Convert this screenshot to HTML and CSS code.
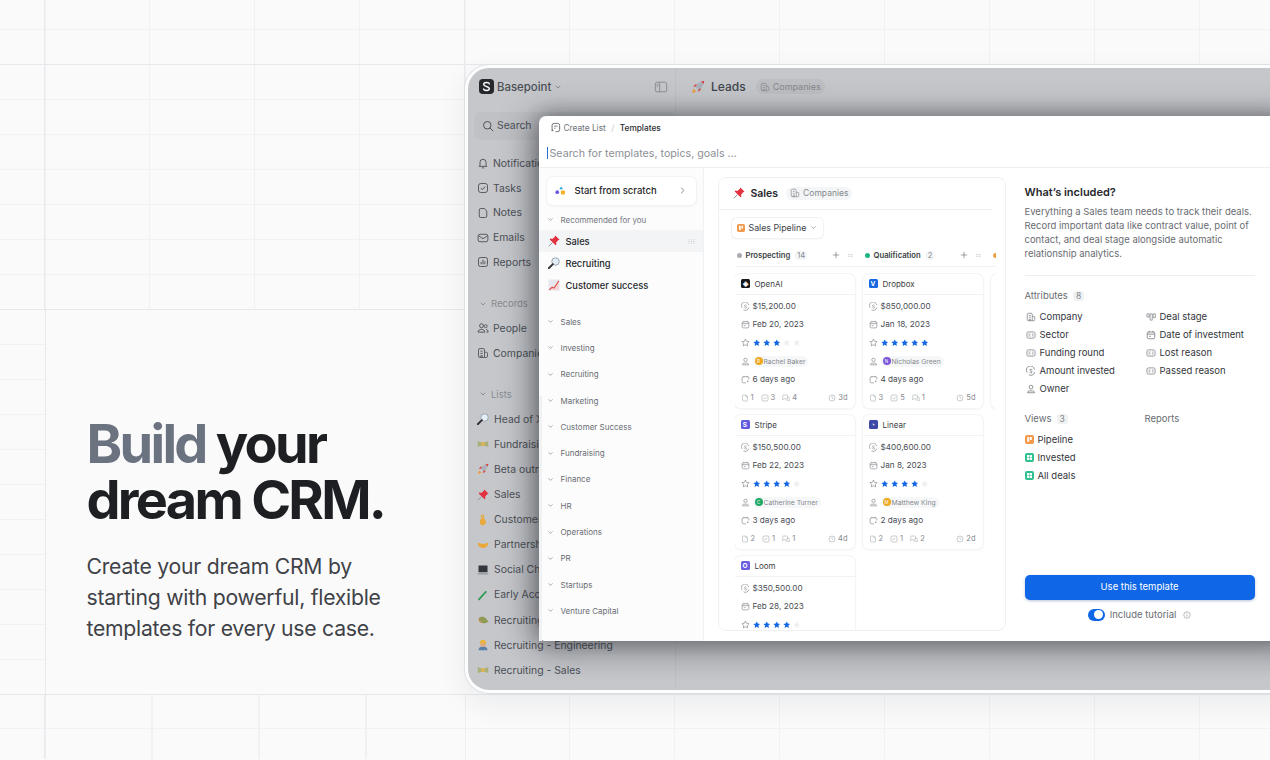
FILE: index.html
```html
<!DOCTYPE html>
<html lang="en">
<head>
    <meta charset="UTF-8">
    <meta name="viewport" content="width=device-width, initial-scale=1.0">
    <title>Build your dream CRM</title>
    <link rel="stylesheet" href="styles.css">
</head>
<body>

<!-- icon sprite -->
<svg class="sprite" xmlns="http://www.w3.org/2000/svg">
    <symbol id="logo" viewBox="0 0 16 16"><rect width="16" height="16" rx="4" fill="#26282c"/><path d="M11 5.2C11 4.2 10 3.8 8 3.8S5 4.6 5 5.8 6.2 7.4 8 8s3 1 3 2.2-1 2-3 2-3-.5-3-1.5" fill="none" stroke="#fff" stroke-width="1.5" stroke-linecap="round"/></symbol>
    <symbol id="chev" viewBox="0 0 16 16"><path d="M4 6l4 4 4-4" fill="none" stroke="currentColor" stroke-width="1.6" stroke-linecap="round" stroke-linejoin="round"/></symbol>
    <symbol id="right" viewBox="0 0 16 16"><path d="M6 3.5l4.5 4.5L6 12.5" fill="none" stroke="currentColor" stroke-width="1.4" stroke-linecap="round" stroke-linejoin="round"/></symbol>
    <symbol id="panel" viewBox="0 0 16 16"><rect x="1.5" y="2.5" width="13" height="11" rx="2" fill="none" stroke="currentColor"/><path d="M6.5 2.5v11M3 5h2M3 7h2" fill="none" stroke="currentColor"/></symbol>
    <symbol id="search" viewBox="0 0 16 16"><circle cx="7" cy="7" r="5" fill="none" stroke="currentColor" stroke-width="1.3"/><path d="M11 11l3.5 3.5" stroke="currentColor" stroke-width="1.3" stroke-linecap="round"/></symbol>
    <symbol id="bell" viewBox="0 0 16 16"><path d="M4 11V7a4 4 0 018 0v4l1.2 1.5H2.8zM6.5 14.5h3" fill="none" stroke="currentColor" stroke-width="1.2" stroke-linejoin="round"/></symbol>
    <symbol id="task" viewBox="0 0 16 16"><rect x="2" y="2" width="12" height="12" rx="3" fill="none" stroke="currentColor" stroke-width="1.2"/><path d="M5 8l2.2 2.2L11 6" fill="none" stroke="currentColor" stroke-width="1.2"/></symbol>
    <symbol id="note" viewBox="0 0 16 16"><path d="M3 4a2 2 0 012-2h5l3 3.5V12a2 2 0 01-2 2H5a2 2 0 01-2-2z" fill="none" stroke="currentColor" stroke-width="1.2" stroke-linejoin="round"/></symbol>
    <symbol id="mail" viewBox="0 0 16 16"><rect x="1.5" y="3" width="13" height="10" rx="2.5" fill="none" stroke="currentColor" stroke-width="1.2"/><path d="M2 5l6 4 6-4" fill="none" stroke="currentColor" stroke-width="1.2"/></symbol>
    <symbol id="report" viewBox="0 0 16 16"><rect x="2" y="2" width="12" height="12" rx="2.5" fill="none" stroke="currentColor" stroke-width="1.2"/><path d="M5.5 11V8M8 11V5M10.5 11V7" stroke="currentColor" stroke-width="1.2"/></symbol>
    <symbol id="people" viewBox="0 0 16 16"><circle cx="6" cy="5" r="2.6" fill="none" stroke="currentColor" stroke-width="1.2"/><circle cx="11.5" cy="5.5" r="2" fill="none" stroke="currentColor" stroke-width="1.1"/><path d="M1.5 13.5c0-2.5 2-3.7 4.500-3.700s4.500 1.200 4.500 3.700zM12 9.800c1.600.2 2.800 1.300 2.800 3.700h-2" fill="none" stroke="currentColor" stroke-width="1.2"/></symbol>
    <symbol id="company" viewBox="0 0 16 16"><path d="M2 4a2 2 0 012-2h4a2 2 0 012 2v10H4a2 2 0 01-2-2zM10 7h2.500a1.500 1.500 0 011.500 1.500V12a2 2 0 01-2 2h-2M4.500 5.500h3M4.500 8.500h3M5 14v-2.500h2V14" fill="none" stroke="currentColor" stroke-width="1.1"/></symbol>
    <symbol id="create" viewBox="0 0 16 16"><path d="M3 11V5a3 3 0 013-3h5a3 3 0 013 3v6a3 3 0 01-3 3H8" fill="none" stroke="currentColor" stroke-width="1.200"/><path d="M6 6h5M6 9h2M3.500 13v-2.500M2 12.500h3" stroke="currentColor" stroke-width="1.100"/></symbol>
    <symbol id="drag" viewBox="0 0 16 16"><path d="M3 5h1.500M7.200 5h1.500M11.500 5H13M3 8h1.500M7.200 8h1.500M11.500 8H13M3 11h1.500M7.200 11h1.500M11.500 11H13" stroke="currentColor" stroke-width="1.400"/></symbol>
    <symbol id="grip" viewBox="0 0 16 16"><path d="M3 6h10M3 10h10" stroke="currentColor" stroke-width="1.300" stroke-dasharray="4 2"/></symbol>
    <symbol id="plus" viewBox="0 0 16 16"><path d="M8 2.500v11M2.500 8h11" stroke="currentColor" stroke-width="1.300" stroke-linecap="round"/></symbol>
    <symbol id="dollar" viewBox="0 0 16 16"><path d="M13.500 5.500A6.500 6.500 0 102 10.500M4.500 14a6.500 6.500 0 009.500-4" fill="none" stroke="currentColor" stroke-width="1.200"/><path d="M10 6.300C9.700 5.500 9 5.200 8 5.200c-1.200 0-2 .6-2 1.400 0 2 4 1 4 3 0 .8-.8 1.300-2 1.300-1 0-1.800-.4-2-1.200" fill="none" stroke="currentColor" stroke-width="1.100"/></symbol>
    <symbol id="cal" viewBox="0 0 16 16"><rect x="2" y="3" width="12" height="11" rx="2.500" fill="none" stroke="currentColor" stroke-width="1.200"/><path d="M2 6.500h12M5 1.500V4M11 1.500V4M5 10h3" stroke="currentColor" stroke-width="1.200"/></symbol>
    <symbol id="star-o" viewBox="0 0 16 16"><path d="M8 1.800l1.900 4.100 4.500.6-3.300 3.100.9 4.500L8 11.900l-4 2.200.9-4.500L1.600 6.500l4.500-.6z" fill="none" stroke="currentColor" stroke-width="1.200" stroke-linejoin="round"/></symbol>
    <symbol id="star" viewBox="0 0 16 16"><path d="M8 1l2.200 4.500 5 .7-3.600 3.500.9 5L8 12.300l-4.500 2.400.9-5L.8 6.200l5-.7z"/></symbol>
    <symbol id="person" viewBox="0 0 16 16"><circle cx="8" cy="5" r="3" fill="none" stroke="currentColor" stroke-width="1.200"/><path d="M2.500 14c0-1.700 1-3 3-3h5c2 0 3 1.300 3 3z" fill="none" stroke="currentColor" stroke-width="1.200" stroke-linejoin="round"/></symbol>
    <symbol id="calclock" viewBox="0 0 16 16"><path d="M14 8V5.500A2.500 2.500 0 0011.500 3h-7A2.500 2.500 0 002 5.500v6A2.500 2.500 0 004.500 14H9M5 1.500V4M11 1.500V4" fill="none" stroke="currentColor" stroke-width="1.200"/><path d="M11 9.500l3 1.800-3 1.800z" fill="currentColor"/></symbol>
    <symbol id="doc" viewBox="0 0 16 16"><path d="M3 3.500A1.500 1.500 0 014.500 2H10l3 3.500v7a1.500 1.500 0 01-1.500 1.500h-7A1.500 1.500 0 013 12.500zM10 2v3.500h3" fill="none" stroke="currentColor" stroke-width="1.100"/></symbol>
    <symbol id="chat" viewBox="0 0 16 16"><path d="M1.500 3.500A1.500 1.500 0 013 2h6.500A1.500 1.500 0 0111 3.500V8a1.500 1.500 0 01-1.500 1.500H4L1.500 12zM11 6h2a1.500 1.500 0 011.500 1.500V14L12 12H7" fill="none" stroke="currentColor" stroke-width="1.100" stroke-linejoin="round"/></symbol>
    <symbol id="clock" viewBox="0 0 16 16"><circle cx="8" cy="8" r="6" fill="none" stroke="currentColor" stroke-width="1.200"/><path d="M8 4.500V8l2.500 1.500" fill="none" stroke="currentColor" stroke-width="1.100"/></symbol>
    <symbol id="tag" viewBox="0 0 16 16"><rect x="1.500" y="3" width="13" height="10" rx="2.500" fill="none" stroke="currentColor" stroke-width="1.100"/><path d="M4 6.500h3M4 9.500h3M9.500 6.500H12M9.500 9.500H12" stroke="currentColor" stroke-width="1.100"/></symbol>
    <symbol id="stage" viewBox="0 0 16 16"><path d="M1.500 3h3.500v5H1.500zM6.500 3H10v10H6.500zM11.500 3H15v6h-3.500z" fill="none" stroke="currentColor" stroke-width="1"/></symbol>
    <symbol id="info" viewBox="0 0 16 16"><circle cx="8" cy="8" r="6.500" fill="none" stroke="currentColor" stroke-width="1.100"/><path d="M8 7v4.500" stroke="currentColor" stroke-width="1.200"/><circle cx="8" cy="4.800" r=".9" fill="currentColor"/></symbol>
    <symbol id="pipeline" viewBox="0 0 16 16"><rect width="16" height="16" rx="3.500" fill="#f2994a"/><path d="M4 3.500h3.500V12H4zM8.800 3.500H12V9H8.800z" fill="#fff"/></symbol>
    <symbol id="table" viewBox="0 0 16 16"><rect width="16" height="16" rx="3.500" fill="#2fc08f"/><path d="M3.500 3.500h4v4h-4zM8.500 3.500h4v4h-4zM3.500 8.500h4v4h-4zM8.500 8.500h4v4h-4z" fill="#fff"/></symbol>

    <symbol id="e-pin" viewBox="0 0 16 16"><path d="M6 10.200L1 15" stroke="#8f949b" stroke-width="1.300"/><path d="M9.800 .6l5.600 5.600-1.900.9-2.700 3.300.4 2.500-1.100.8L2.300 5.900l.8-1.100 2.500.4L8.900 2.500z" fill="#e2323f"/></symbol>
    <symbol id="e-glass" viewBox="0 0 16 16"><circle cx="10" cy="6" r="5" fill="#e3edf5" stroke="#9aa4ad" stroke-width="1.300"/><path d="M6.500 9.500L1 15" stroke="#2d2f33" stroke-width="2.400" stroke-linecap="round"/></symbol>
    <symbol id="e-chart" viewBox="0 0 16 16"><rect x="0.500" y="0.500" width="15" height="15" rx="1" fill="#e6e8ee"/><path d="M1.500 14.500l4-3.500 2.500 1L14.500 2.500V14.500z" fill="#f6d5d4"/><path d="M1.500 14.500l4-3.500 2.500 1L14.500 2.500" fill="none" stroke="#e0524f" stroke-width="1.500"/></symbol>
    <symbol id="e-rocket" viewBox="0 0 16 16"><path d="M3 10L1 15l5-2z" fill="#f09a3a"/><path d="M5 7.500C7 3.500 10.500 1.500 15 1c-.5 4.500-2.500 8-6.500 10z" fill="#aab1bb"/><path d="M11.500 1.500L15 1l-.4 3.600z" fill="#dc3b3b"/><path d="M5 7.500L2.500 8l2-3h2.500zM8.500 11L8 13.500l3-2V9z" fill="#d8453f"/></symbol>
    <symbol id="e-money" viewBox="0 0 16 16"><path d="M1 4l4 1.500h6L15 4v8l-4-1.500H5L1 12z" fill="#a9b07c"/><rect x="5.500" y="5.500" width="5" height="5" fill="#d9b458"/></symbol>
    <symbol id="e-ok" viewBox="0 0 16 16"><circle cx="7.500" cy="3" r="1.800" fill="none" stroke="#e9a93c" stroke-width="1.400"/><path d="M4.500 7c0-2 6-2 6 0l1.500 3c0 3-2 5-4.500 5S3.500 13.500 4 10z" fill="#e9a93c"/></symbol>
    <symbol id="e-shake" viewBox="0 0 16 16"><path d="M1 5l7 1.500L15 5c0 4-3 7-7 7S1 9 1 5z" fill="#eaa83a"/></symbol>
    <symbol id="e-laptop" viewBox="0 0 16 16"><rect x="2" y="2" width="12" height="9" fill="#34373d"/><path d="M1 12h14v2H1z" fill="#9aa0a7"/></symbol>
    <symbol id="e-pencil" viewBox="0 0 16 16"><path d="M2 14.500L12.500 3" stroke="#2e9a50" stroke-width="2.400"/><path d="M13 3l1.500-1.500" stroke="#c7cbd1" stroke-width="2"/></symbol>
    <symbol id="e-cash" viewBox="0 0 16 16"><path d="M2 6c2-3 7-3 10 0l3 4c-2 2-5 3-8 2z" fill="#8f9a55"/><path d="M2 6l5 6c-3 0-5-2-5-6z" fill="#c88a49"/></symbol>
    <symbol id="e-worker" viewBox="0 0 16 16"><path d="M2 15c0-3 2-5 6-5s6 2 6 5z" fill="#5a7fa8"/><circle cx="8" cy="7" r="3.500" fill="#e0a982"/><path d="M3.500 6C3.500 2.500 6 1 8 1s4.500 1.500 4.500 5z" fill="#e9b33f"/></symbol>
</svg>

<div class="page">
    <div class="band band-top"></div>
    <div class="band band-upper"></div>
    <div class="band-mid">
        <div class="mid-edge"></div>
        <section class="hero">
            <h1>
                <span class="h-line"><span class="muted">Build</span> <span>your</span></span>
                <span class="h-line">dream CRM.</span>
            </h1>
            <p>Create your dream CRM by starting with powerful, flexible templates for every use case.</p>
        </section>
    </div>
    <div class="band-low">
        <div class="low-left"></div>
        <div class="low-right"></div>
    </div>

    <!-- app window behind the modal -->
    <div class="window">
        <aside class="side">
            <div class="workspace">
                <svg class="ic-logo"><use href="#logo"/></svg>
                <span>Basepoint</span>
                <svg class="ic-chev"><use href="#chev"/></svg>
                <svg class="ic-panel"><use href="#panel"/></svg>
            </div>
            <div class="side-search"><svg class="ic"><use href="#search"/></svg>Search</div>

            <nav class="side-group">
                <div class="side-item"><svg class="ic"><use href="#bell"/></svg>Notifications</div>
                <div class="side-item"><svg class="ic"><use href="#task"/></svg>Tasks</div>
                <div class="side-item"><svg class="ic"><use href="#note"/></svg>Notes</div>
                <div class="side-item"><svg class="ic"><use href="#mail"/></svg>Emails</div>
                <div class="side-item"><svg class="ic"><use href="#report"/></svg>Reports</div>
            </nav>

            <div class="side-head"><svg class="ic-chev"><use href="#chev"/></svg>Records</div>
            <nav class="side-group-tight">
                <div class="side-item"><svg class="ic"><use href="#people"/></svg>People</div>
                <div class="side-item"><svg class="ic"><use href="#company"/></svg>Companies</div>
            </nav>

            <div class="side-head"><svg class="ic-chev"><use href="#chev"/></svg>Lists</div>
            <nav class="side-lists">
                <div class="side-item"><svg class="ic"><use href="#e-glass"/></svg>Head of X</div>
                <div class="side-item"><svg class="ic"><use href="#e-money"/></svg>Fundraising</div>
                <div class="side-item"><svg class="ic"><use href="#e-rocket"/></svg>Beta outreach</div>
                <div class="side-item"><svg class="ic"><use href="#e-pin"/></svg>Sales</div>
                <div class="side-item"><svg class="ic"><use href="#e-ok"/></svg>Customer success</div>
                <div class="side-item"><svg class="ic"><use href="#e-shake"/></svg>Partnerships</div>
                <div class="side-item"><svg class="ic"><use href="#e-laptop"/></svg>Social Channels</div>
                <div class="side-item"><svg class="ic"><use href="#e-pencil"/></svg>Early Access</div>
                <div class="side-item"><svg class="ic"><use href="#e-cash"/></svg>Recruiting</div>
                <div class="side-item"><svg class="ic"><use href="#e-worker"/></svg>Recruiting - Engineering</div>
                <div class="side-item"><svg class="ic"><use href="#e-money"/></svg>Recruiting - Sales</div>
            </nav>
        </aside>
        <header class="main-head">
            <svg class="ic-emoji"><use href="#e-rocket"/></svg>
            <span class="main-title">Leads</span>
            <span class="main-chip"><svg class="ic-mini"><use href="#company"/></svg>Companies</span>
        </header>

        <!-- templates modal -->
        <div class="modal">
            <div class="crumbs">
                <svg class="ic-crumb"><use href="#create"/></svg>
                <span>Create List</span>
                <span class="crumb-sep">/</span>
                <span class="crumb-now">Templates</span>
            </div>
            <div class="modal-search"><span class="caret"></span>Search for templates, topics, goals ...</div>

            <div class="modal-body">
                <div class="tpl-list">
                    <span class="scroll-thumb"></span>
                    <div class="scratch">
                        <span class="scratch-tile">
                            <svg viewBox="0 0 16 16" class="scratch-dots"><circle cx="4" cy="10" r="2.300" fill="#6a5ae0"/><path d="M8.800 3l2.300 3.600H6.500z" fill="#23a6d9"/><rect x="8.500" y="8" width="5" height="5" rx="1" fill="#f0b429"/></svg>
                        </span>
                        <span class="scratch-text">Start from scratch</span>
                        <svg class="ic-right"><use href="#right"/></svg>
                    </div>
                    <div class="tpl-head"><svg class="ic-tchev"><use href="#chev"/></svg>Recommended for you</div>
                    <div class="tpl-row is-active">
                        <svg class="ic-emoji-sm"><use href="#e-pin"/></svg>Sales
                        <svg class="ic-drag"><use href="#drag"/></svg>
                    </div>
                    <div class="tpl-row"><svg class="ic-emoji-sm"><use href="#e-glass"/></svg>Recruiting</div>
                    <div class="tpl-row"><svg class="ic-emoji-sm"><use href="#e-chart"/></svg>Customer success</div>

                    <div class="tpl-cats">
                        <div class="tpl-cat"><svg class="ic-tchev"><use href="#chev"/></svg>Sales</div>
                        <div class="tpl-cat"><svg class="ic-tchev"><use href="#chev"/></svg>Investing</div>
                        <div class="tpl-cat"><svg class="ic-tchev"><use href="#chev"/></svg>Recruiting</div>
                        <div class="tpl-cat"><svg class="ic-tchev"><use href="#chev"/></svg>Marketing</div>
                        <div class="tpl-cat"><svg class="ic-tchev"><use href="#chev"/></svg>Customer Success</div>
                        <div class="tpl-cat"><svg class="ic-tchev"><use href="#chev"/></svg>Fundraising</div>
                        <div class="tpl-cat"><svg class="ic-tchev"><use href="#chev"/></svg>Finance</div>
                        <div class="tpl-cat"><svg class="ic-tchev"><use href="#chev"/></svg>HR</div>
                        <div class="tpl-cat"><svg class="ic-tchev"><use href="#chev"/></svg>Operations</div>
                        <div class="tpl-cat"><svg class="ic-tchev"><use href="#chev"/></svg>PR</div>
                        <div class="tpl-cat"><svg class="ic-tchev"><use href="#chev"/></svg>Startups</div>
                        <div class="tpl-cat"><svg class="ic-tchev"><use href="#chev"/></svg>Venture Capital</div>
                    </div>
                </div>

                <!-- preview -->
                <div class="preview">
                    <div class="preview-head">
                        <svg class="ic-emoji-sm"><use href="#e-pin"/></svg>
                        <span class="preview-title">Sales</span>
                        <span class="preview-chip"><svg class="ic-mini"><use href="#company"/></svg>Companies</span>
                    </div>
                    <div class="view-select">
                        <svg class="ic-view"><use href="#pipeline"/></svg>Sales Pipeline
                        <svg class="ic-tchev"><use href="#chev"/></svg>
                    </div>

                    <div class="board">
                        <div class="column">
                            <div class="col-head">
                                <span class="dot dot-grey"></span><b>Prospecting</b><span class="count">14</span>
                                <svg class="ic-plus"><use href="#plus"/></svg><svg class="ic-grip"><use href="#grip"/></svg>
                            </div>
                            <div class="card">
                                <div class="card-head"><span class="co co-openai">◈</span>OpenAI</div>
                                <div class="card-row"><svg class="ci"><use href="#dollar"/></svg>$15,200.00</div>
                                <div class="card-row"><svg class="ci"><use href="#cal"/></svg>Feb 20, 2023</div>
                                <div class="card-row"><svg class="ci"><use href="#star-o"/></svg><span class="stars"><svg><use href="#star"/></svg><svg><use href="#star"/></svg><svg><use href="#star"/></svg><svg class="off"><use href="#star"/></svg><svg class="off"><use href="#star"/></svg></span></div>
                                <div class="card-row"><svg class="ci"><use href="#person"/></svg><span class="who"><i class="av av-amber">R</i>Rachel Baker</span></div>
                                <div class="card-row"><svg class="ci"><use href="#calclock"/></svg>6 days ago</div>
                                <div class="card-foot"><svg><use href="#doc"/></svg>1<svg class="sp"><use href="#task"/></svg>3<svg class="sp"><use href="#chat"/></svg>4<span class="age"><svg><use href="#clock"/></svg>3d</span></div>
                            </div>
                            <div class="card">
                                <div class="card-head"><span class="co co-stripe">S</span>Stripe</div>
                                <div class="card-row"><svg class="ci"><use href="#dollar"/></svg>$150,500.00</div>
                                <div class="card-row"><svg class="ci"><use href="#cal"/></svg>Feb 22, 2023</div>
                                <div class="card-row"><svg class="ci"><use href="#star-o"/></svg><span class="stars"><svg><use href="#star"/></svg><svg><use href="#star"/></svg><svg><use href="#star"/></svg><svg><use href="#star"/></svg><svg class="off"><use href="#star"/></svg></span></div>
                                <div class="card-row"><svg class="ci"><use href="#person"/></svg><span class="who"><i class="av av-green">C</i>Catherine Turner</span></div>
                                <div class="card-row"><svg class="ci"><use href="#calclock"/></svg>3 days ago</div>
                                <div class="card-foot"><svg><use href="#doc"/></svg>2<svg class="sp"><use href="#task"/></svg>1<svg class="sp"><use href="#chat"/></svg>1<span class="age"><svg><use href="#clock"/></svg>4d</span></div>
                            </div>
                            <div class="card">
                                <div class="card-head"><span class="co co-loom">O</span>Loom</div>
                                <div class="card-row"><svg class="ci"><use href="#dollar"/></svg>$350,500.00</div>
                                <div class="card-row"><svg class="ci"><use href="#cal"/></svg>Feb 28, 2023</div>
                                <div class="card-row"><svg class="ci"><use href="#star-o"/></svg><span class="stars"><svg><use href="#star"/></svg><svg><use href="#star"/></svg><svg><use href="#star"/></svg><svg><use href="#star"/></svg><svg class="off"><use href="#star"/></svg></span></div>
                            </div>
                        </div>

                        <div class="column">
                            <div class="col-head">
                                <span class="dot dot-green"></span><b>Qualification</b><span class="count">2</span>
                                <svg class="ic-plus"><use href="#plus"/></svg><svg class="ic-grip"><use href="#grip"/></svg>
                            </div>
                            <div class="card">
                                <div class="card-head"><span class="co co-dropbox">V</span>Dropbox</div>
                                <div class="card-row"><svg class="ci"><use href="#dollar"/></svg>$850,000.00</div>
                                <div class="card-row"><svg class="ci"><use href="#cal"/></svg>Jan 18, 2023</div>
                                <div class="card-row"><svg class="ci"><use href="#star-o"/></svg><span class="stars"><svg><use href="#star"/></svg><svg><use href="#star"/></svg><svg><use href="#star"/></svg><svg><use href="#star"/></svg><svg><use href="#star"/></svg></span></div>
                                <div class="card-row"><svg class="ci"><use href="#person"/></svg><span class="who"><i class="av av-purple">N</i>Nicholas Green</span></div>
                                <div class="card-row"><svg class="ci"><use href="#calclock"/></svg>4 days ago</div>
                                <div class="card-foot"><svg><use href="#doc"/></svg>3<svg class="sp"><use href="#task"/></svg>5<svg class="sp"><use href="#chat"/></svg>1<span class="age"><svg><use href="#clock"/></svg>5d</span></div>
                            </div>
                            <div class="card">
                                <div class="card-head"><span class="co co-linear">◔</span>Linear</div>
                                <div class="card-row"><svg class="ci"><use href="#dollar"/></svg>$400,600.00</div>
                                <div class="card-row"><svg class="ci"><use href="#cal"/></svg>Jan 8, 2023</div>
                                <div class="card-row"><svg class="ci"><use href="#star-o"/></svg><span class="stars"><svg><use href="#star"/></svg><svg><use href="#star"/></svg><svg><use href="#star"/></svg><svg><use href="#star"/></svg><svg class="off"><use href="#star"/></svg></span></div>
                                <div class="card-row"><svg class="ci"><use href="#person"/></svg><span class="who"><i class="av av-amber">M</i>Matthew King</span></div>
                                <div class="card-row"><svg class="ci"><use href="#calclock"/></svg>2 days ago</div>
                                <div class="card-foot"><svg><use href="#doc"/></svg>2<svg class="sp"><use href="#task"/></svg>1<svg class="sp"><use href="#chat"/></svg>2<span class="age"><svg><use href="#clock"/></svg>2d</span></div>
                            </div>
                        </div>

                        <div class="column">
                            <div class="col-head"><span class="dot dot-orange"></span></div>
                            <div class="card card-stub"></div>
                        </div>
                    </div>
                </div>

                <!-- what's included -->
                <div class="included">
                    <h2>What’s included?</h2>
                    <p>Everything a Sales team needs to track their deals. Record important data like contract value, point of contact, and deal stage alongside automatic relationship analytics.</p>
                    <hr>
                    <div class="inc-label">Attributes <span class="inc-count">8</span></div>
                    <div class="attrs">
                        <div class="attr"><svg><use href="#company"/></svg>Company</div>
                        <div class="attr"><svg><use href="#stage"/></svg>Deal stage</div>
                        <div class="attr"><svg><use href="#tag"/></svg>Sector</div>
                        <div class="attr"><svg><use href="#cal"/></svg>Date of investment</div>
                        <div class="attr"><svg><use href="#tag"/></svg>Funding round</div>
                        <div class="attr"><svg><use href="#tag"/></svg>Lost reason</div>
                        <div class="attr"><svg><use href="#dollar"/></svg>Amount invested</div>
                        <div class="attr"><svg><use href="#tag"/></svg>Passed reason</div>
                        <div class="attr"><svg><use href="#person"/></svg>Owner</div>
                    </div>
                    <div class="views">
                        <div>
                            <div class="inc-label">Views <span class="inc-count">3</span></div>
                            <div class="view"><svg><use href="#pipeline"/></svg>Pipeline</div>
                            <div class="view"><svg><use href="#table"/></svg>Invested</div>
                            <div class="view"><svg><use href="#table"/></svg>All deals</div>
                        </div>
                        <div><div class="inc-label">Reports</div></div>
                    </div>
                    <button class="use-btn" type="button">Use this template</button>
                    <div class="tutorial">
                        <span class="toggle"></span>Include tutorial
                        <svg class="ic-info"><use href="#info"/></svg>
                    </div>
                </div>
            </div>
        </div>
    </div>
</div>

</body>
</html>
```

FILE: styles.css
```css
* {
    box-sizing: border-box;
}

body {
    margin: 0;
    background-color: #fafafb;
    font-family: Inter, "Liberation Sans", sans-serif;
    color: #26282c;
}

.sprite {
    position: absolute;
    width: 0;
    height: 0;
}

svg {
    flex: none;
}

.page {
    position: relative;
    width: 1270px;
    height: 760px;
    overflow: hidden;
}

/* grid paper behind everything */
.band {
    background-image:
        linear-gradient(#e9eaee, #e9eaee),
        linear-gradient(#e9eaee, #e9eaee),
        linear-gradient(90deg, #f0f1f3 1px, transparent 1px),
        linear-gradient(#f1f2f4 1px, transparent 1px);
    background-repeat: no-repeat, no-repeat, repeat, repeat;
    background-size: 1.5px 100%, 1.5px 100%, 105px 100%, 100% 35px;
    background-position: 44px 0, 464px 0, 44px 0, 0 29px;
    border-bottom: 1.5px solid #e7e8ec;
}

.band-top {
    height: 65px;
}

.band-upper {
    height: 244.5px;
    background-position: 44px 0, 464px 0, 44px 0, 0 34px;
}

.band-mid {
    display: flex;
    height: 385.5px;
    border-bottom: 1.5px solid #e7e8ec;
}

.mid-edge {
    width: 45.5px;
    border-right: 1.5px solid #e9eaee;
    background-image: linear-gradient(#f1f2f4 1px, transparent 1px);
    background-size: 100% 35px;
    background-position: 0 34px;
}

.band-low {
    display: flex;
    height: 64px;
}

.low-left {
    width: 465.5px;
    border-right: 1.5px solid #eceef0;
    background-image:
        linear-gradient(#e9eaee, #e9eaee),
        linear-gradient(90deg, #f0f1f3 1.5px, transparent 1.5px),
        linear-gradient(#f1f2f4 1px, transparent 1px);
    background-repeat: no-repeat, repeat, repeat;
    background-size: 1.5px 100%, 107px 100%, 100% 35px;
    background-position: 44px 0, 44px 0, 0 33px;
}

.low-right {
    flex: 1;
    background-image:
        linear-gradient(90deg, #f0f1f3 1px, transparent 1px),
        linear-gradient(#f1f2f4 1px, transparent 1px);
    background-size: 105px 100%, 100% 35px;
    background-position: 103px 0, 0 33px;
}

/* left copy */
.hero {
    width: 400px;
    padding: 106px 0 0 41px;
}

.hero h1 {
    margin: 0 0 23px;
    font-size: 54px;
    line-height: 56px;
    font-weight: 700;
    letter-spacing: -0.05em;
    color: #1d1f22;
}

.h-line {
    display: block;
    white-space: nowrap;
}

.hero .muted {
    color: #6b7280;
}

.hero p {
    margin: 0;
    width: 310px;
    font-size: 21.2px;
    line-height: 31px;
    letter-spacing: -0.012em;
    color: #3f4247;
}

/* app window */
.window {
    position: absolute;
    left: 465px;
    top: 65px;
    display: flex;
    flex-wrap: wrap;
    align-content: flex-start;
    width: 840px;
    height: 628px;
    background: #c5c7cb;
    border: 3.5px solid #fdfdfe;
    border-radius: 24px;
    box-shadow: 0 0 0 1px #dfe0e4, 0 10px 30px rgba(20, 25, 35, 0.07);
    overflow: hidden;
}

.side {
    width: 208px;
    height: 620px;
    border-right: 1px solid #bdbfc3;
    color: #4c4f55;
    font-size: 10.4px;
}

.workspace {
    display: flex;
    align-items: center;
    height: 37px;
    padding-left: 11px;
    font-size: 11.4px;
    font-weight: 500;
}

.ic-logo {
    width: 15px;
    height: 15px;
    margin-right: 3px;
}

.workspace .ic-chev {
    margin-left: 3px;
}

.ic-chev {
    width: 8px;
    height: 8px;
    color: #7a7d83;
}

.ic-panel {
    width: 14px;
    height: 14px;
    margin-left: 91.5px;
    color: #85888e;
}

.side-search {
    display: flex;
    align-items: center;
    gap: 3px;
    height: 28px;
    margin: 6.5px 0 0 6px;
    padding-left: 8px;
    background: #bfc1c5;
    border-radius: 7px;
}

.ic {
    width: 12px;
    height: 12px;
}

.side-group {
    margin-top: 11.5px;
}

.side-item {
    display: flex;
    align-items: center;
    gap: 4px;
    height: 24.75px;
    padding-left: 9px;
    white-space: nowrap;
}

.side-head {
    display: flex;
    align-items: center;
    gap: 4px;
    height: 24.75px;
    margin-top: 16.5px;
    padding-left: 11px;
    font-size: 9.5px;
    color: #898c92;
}

.side-lists .side-item {
    height: 25.1px;
    gap: 5px;
}

.main-head {
    display: flex;
    align-items: center;
    height: 37px;
    padding-left: 15px;
}

.ic-emoji {
    width: 14px;
    height: 14px;
}

.main-title {
    margin-left: 6px;
    font-size: 12px;
    font-weight: 500;
    color: #42454b;
}

.main-chip {
    display: flex;
    align-items: center;
    gap: 3px;
    height: 15px;
    margin-left: 10px;
    padding: 0 4px;
    background: #bdbfc3;
    border-radius: 7px;
    font-size: 9px;
    color: #84878d;
}

.ic-mini {
    width: 10px;
    height: 10px;
}

/* modal */
.modal {
    position: absolute;
    left: 70.5px;
    top: 47.5px;
    width: 760px;
    height: 525px;
    background: #fff;
    border-radius: 7px 0 0 7px;
    box-shadow: -6px 0 34px rgba(30, 32, 38, 0.38), 0 -2px 16px rgba(30, 32, 38, 0.22), 0 10px 30px rgba(30, 32, 38, 0.28);
}

.crumbs {
    display: flex;
    align-items: center;
    height: 24px;
    padding-left: 11px;
    font-size: 8.3px;
    color: #6d7076;
}

.ic-crumb {
    width: 11px;
    height: 11px;
    margin-right: 3px;
    color: #55585e;
}

.crumb-sep {
    margin: 0 5.500px;
    color: #c5c7cb;
}

.crumb-now {
    color: #2c2e32;
    font-weight: 500;
}

.modal-search {
    display: flex;
    align-items: center;
    height: 28px;
    padding-left: 8px;
    border-bottom: 1px solid #eeeff1;
    font-size: 10.7px;
    color: #8d9095;
}

.caret {
    width: 1px;
    height: 12px;
    margin-right: 2px;
    background: #2a6fd6;
}

.modal-body {
    display: flex;
    height: 473px;
}

.tpl-list {
    position: relative;
    width: 165px;
    flex: none;
    padding-top: 9px;
    background: #fcfcfd;
    border-right: 1px solid #f0f1f3;
    border-bottom-left-radius: 7px;
    color: #26282c;
}

.scroll-thumb {
    position: absolute;
    left: 0;
    top: 228px;
    bottom: 0;
    width: 3px;
    background: #f1f2f4;
}

.scratch {
    display: flex;
    align-items: center;
    width: 149px;
    height: 28px;
    margin-left: 8px;
    padding: 0 9px 0 6px;
    background: #fff;
    border-radius: 6px;
    box-shadow: 0 0 0 1px #f2f3f5, 0 1px 3px rgba(20, 25, 35, 0.07);
    font-size: 9.5px;
    font-weight: 500;
}

.scratch-tile {
    display: flex;
    width: 15px;
    height: 15px;
    align-items: center;
    justify-content: center;
}

.scratch-dots {
    width: 13px;
    height: 13px;
}

.scratch-text {
    flex: 1;
    margin-left: 7px;
}

.ic-right {
    width: 9px;
    height: 9px;
    color: #6d7076;
}

.tpl-head {
    display: flex;
    align-items: center;
    gap: 7px;
    height: 21px;
    margin-top: 4.5px;
    padding-left: 8px;
    font-size: 8px;
    color: #74777d;
}

.ic-tchev {
    width: 7px;
    height: 7px;
    color: #85888e;
}

.tpl-row {
    display: flex;
    align-items: center;
    height: 22px;
    padding-left: 9px;
    font-size: 9.3px;
    font-weight: 500;
}

.tpl-row.is-active {
    background: #f3f4f6;
}

.ic-emoji-sm {
    width: 12px;
    height: 12px;
    margin-right: 6px;
}

.ic-drag {
    width: 9px;
    height: 9px;
    margin-left: auto;
    margin-right: 7px;
    color: #b7b9be;
}

.tpl-cats {
    margin-top: 12.5px;
}

.tpl-cat {
    display: flex;
    align-items: center;
    gap: 7px;
    height: 26.3px;
    padding-left: 8px;
    font-size: 8px;
    color: #696c72;
}

/* board preview */
.preview {
    width: 288px;
    height: 454px;
    flex: none;
    margin: 9px 0 0 14px;
    background: #fff;
    border: 1px solid #f0f1f3;
    border-radius: 8px;
    overflow: hidden;
}

.preview-head {
    display: flex;
    align-items: center;
    height: 32px;
    margin-right: 13px;
    padding-left: 14px;
    border-bottom: 1px solid #eeeff1;
}

.preview-head .ic-emoji-sm {
    margin-right: 6px;
}

.preview-title {
    font-size: 10.5px;
    font-weight: 600;
}

.preview-chip {
    display: flex;
    align-items: center;
    gap: 3px;
    height: 13px;
    margin-left: 8px;
    padding: 0 4px;
    background: #f4f5f6;
    border-radius: 7px;
    font-size: 8.5px;
    color: #85888e;
}

.view-select {
    display: inline-flex;
    align-items: center;
    gap: 4px;
    height: 20px;
    margin: 8px 0 0 13px;
    padding: 0 6px 0 5px;
    background: #fff;
    border-radius: 5px;
    box-shadow: 0 0 0 1px #f1f2f4, 0 1px 3px rgba(20, 25, 35, 0.08);
    font-size: 8.8px;
    color: #3c3f44;
}

.ic-view {
    width: 8px;
    height: 8px;
}

.board {
    display: flex;
    gap: 8px;
    width: 261px;
    margin: 7px 0 0 16px;
    overflow: hidden;
}

.column {
    flex: none;
    width: 120px;
    display: flex;
    flex-direction: column;
    gap: 7px;
}

.col-head {
    display: flex;
    align-items: center;
    height: 22px;
    margin-right: -8px;
    padding-left: 2px;
    border-bottom: 1px solid #f1f2f4;
    font-size: 7.7px;
    color: #3c3f44;
}

.col-head b {
    font-weight: 600;
    margin-left: 4px;
}

.dot {
    width: 5px;
    height: 5px;
    border-radius: 50%;
}

.dot-grey {
    background: #a8abb0;
}

.dot-green {
    background: #1fb57f;
}

.dot-orange {
    background: #f0a04b;
}

.count {
    margin-left: 5px;
    padding: 0 2px;
    background: #f4f5f6;
    border-radius: 3px;
    font-size: 7.5px;
    color: #85888e;
}

.ic-plus {
    width: 8px;
    height: 8px;
    margin-left: auto;
    color: #6d7076;
}

.ic-grip {
    width: 7px;
    height: 7px;
    margin: 0 9px 0 7px;
    color: #a8abb0;
}

.card {
    flex: none;
    height: 134px;
    background: #fff;
    border-radius: 6px;
    box-shadow: 0 0 0 1px #f3f4f5, 0 1px 3px rgba(20, 25, 35, 0.07);
    font-size: 8.2px;
    color: #4a4d53;
}

.card-stub {
    height: 134px;
}

.card-head {
    display: flex;
    align-items: center;
    gap: 5px;
    height: 21px;
    padding-left: 6px;
    border-bottom: 1px solid #f1f2f4;
    font-size: 8px;
    color: #3c3f44;
}

.co {
    display: flex;
    align-items: center;
    justify-content: center;
    width: 9px;
    height: 9px;
    border-radius: 1.5px;
    font-size: 6.5px;
    font-weight: 700;
    color: #fff;
}

.co-openai {
    background: #17181a;
}

.co-stripe {
    background: #635bdf;
}

.co-loom {
    background: #6a5fe0;
}

.co-dropbox {
    background: #1668e3;
}

.co-linear {
    background: #3f4aa8;
}

.card-row {
    display: flex;
    align-items: center;
    height: 18.3px;
    padding-left: 6px;
}

.card-head + .card-row {
    margin-top: 2.500px;
}

.ci {
    width: 9px;
    height: 9px;
    margin-right: 3px;
    color: #85888e;
}

.stars {
    display: flex;
    gap: 2.500px;
    margin-left: 0;
}

.stars svg {
    width: 7.500px;
    height: 7.500px;
    fill: #1668e3;
}

.stars svg.off {
    fill: #eeeff1;
}

.who {
    display: flex;
    align-items: center;
    gap: 1px;
    height: 11px;
    margin-left: 0;
    padding: 0 3px 0 2px;
    background: #f6f7f8;
    border-radius: 6px;
    font-size: 6.8px;
    color: #85888e;
}

.av {
    display: flex;
    align-items: center;
    justify-content: center;
    width: 8px;
    height: 8px;
    border-radius: 50%;
    font-size: 4.500px;
    font-style: normal;
    color: #fff;
}

.av-amber {
    background: #eda81e;
}

.av-green {
    background: #1fa866;
}

.av-purple {
    background: #7a55d8;
}

.card-foot {
    display: flex;
    align-items: center;
    height: 19px;
    padding: 0 7px 0 6px;
    font-size: 7.5px;
    color: #85888e;
}

.card-foot svg {
    width: 8px;
    height: 8px;
    margin-right: 2px;
    color: #a5a8ad;
}

.card-foot svg.sp {
    margin-left: 7px;
}

.age {
    display: flex;
    align-items: center;
    margin-left: auto;
}

/* right panel */
.included {
    display: flex;
    flex-direction: column;
    width: 230px;
    flex: none;
    margin-left: 19px;
    padding: 17px 0 20px;
}

.included h2 {
    margin: 0;
    font-size: 11px;
    line-height: 14px;
    font-weight: 600;
    color: #26282c;
}

.included p {
    margin: 6px 0 0;
    font-size: 9.5px;
    line-height: 14px;
    color: #696c72;
}

.included hr {
    width: 100%;
    margin: 14px 0 13px;
    border: 0;
    border-top: 1px solid #eeeff1;
}

.inc-label {
    display: flex;
    align-items: center;
    gap: 5px;
    height: 14px;
    font-size: 9.5px;
    color: #696c72;
}

.inc-count {
    padding: 0 3px;
    background: #f0f1f3;
    border-radius: 3px;
    font-size: 8.5px;
    color: #85888e;
}

.attrs {
    display: grid;
    grid-template-columns: 120px 1fr;
    margin-top: 5px;
}

.attr {
    display: flex;
    align-items: center;
    height: 18px;
    padding-left: 1px;
    font-size: 9.5px;
    color: #33363b;
}

.attr svg {
    width: 10px;
    height: 10px;
    margin-right: 4px;
    color: #6d7076;
}

.views {
    display: grid;
    grid-template-columns: 120px 1fr;
    margin-top: 14px;
}

.views .inc-label {
    margin-bottom: 5px;
}

.view {
    display: flex;
    align-items: center;
    height: 18px;
    font-size: 9.5px;
    color: #33363b;
}

.view svg {
    width: 9px;
    height: 9px;
    margin-right: 4px;
}

.use-btn {
    width: 100%;
    height: 25px;
    margin-top: auto;
    padding: 0 0 2px;
    background: #0f67e8;
    border: none;
    border-radius: 5px;
    box-shadow: 0 1px 3px rgba(15, 60, 140, 0.3);
    font-family: inherit;
    font-size: 9.5px;
    color: #fff;
}

.tutorial {
    display: flex;
    align-items: center;
    justify-content: center;
    height: 12px;
    margin-top: 9px;
    font-size: 9.5px;
    color: #696c72;
}

.toggle {
    position: relative;
    width: 17px;
    height: 12px;
    margin-right: 5px;
    background: #0f67e8;
    border-radius: 6px;
}

.toggle::after {
    content: "";
    position: absolute;
    right: 1.500px;
    top: 1.500px;
    width: 9px;
    height: 9px;
    background: #fff;
    border-radius: 50%;
}

.ic-info {
    width: 8px;
    height: 8px;
    margin-left: 7px;
    color: #85888e;
}
```
